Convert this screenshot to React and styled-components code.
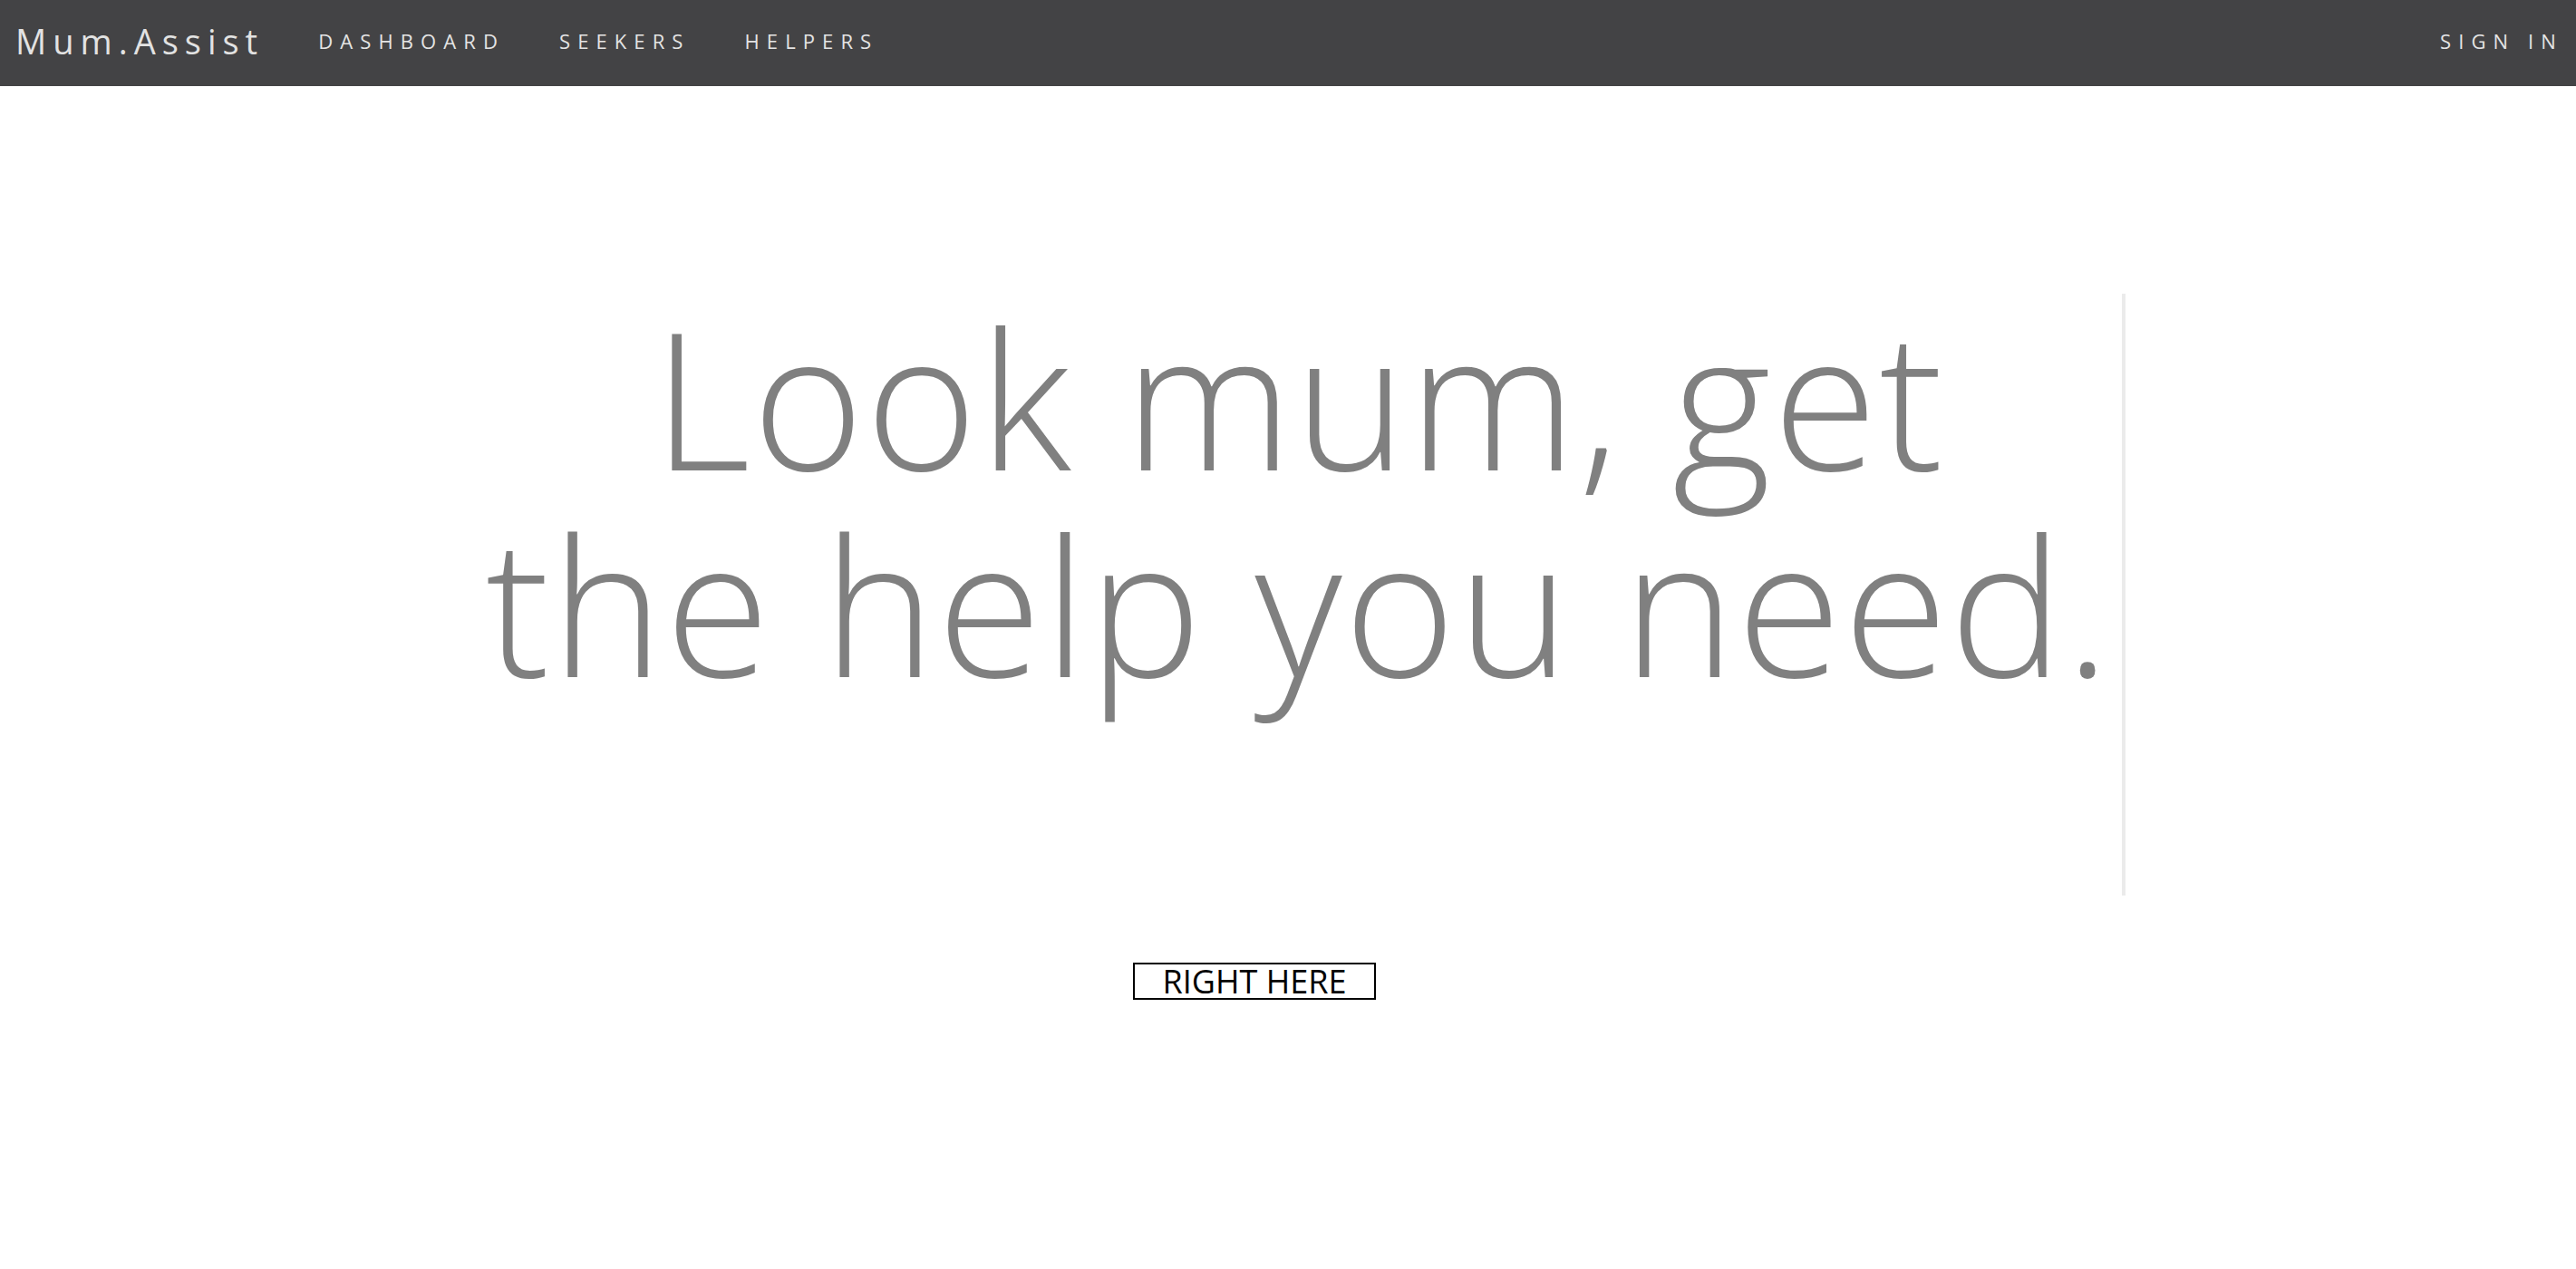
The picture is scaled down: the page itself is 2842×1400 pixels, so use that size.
import React from 'react';
import styled, { createGlobalStyle } from 'styled-components';

const GlobalStyle = createGlobalStyle`
    body {
        margin: 0;
        background: #ffffff;
        font-family: "Open Sans", "Noto Sans", sans-serif;
    }
`;

const NavBar = styled.nav`
    height: 95px;
    box-sizing: border-box;
    background-color: #434345;
    display: flex;
    align-items: center;
    justify-content: space-between;
    padding: 0 14px 5px 17px;
`;

const NavLeft = styled.div`
    display: flex;
    align-items: center;
    gap: 60px;
`;

const Brand = styled.a`
    color: #e2e2e2;
    font-size: 38px;
    letter-spacing: 7px;
    font-weight: 400;
    text-decoration: none;
`;

const NavLink = styled.a`
    color: #e4e4e4;
    font-size: 22px;
    letter-spacing: 8.1px;
    text-decoration: none;
    text-transform: uppercase;
`;

const Hero = styled.main`
    display: flex;
    flex-direction: column;
    align-items: center;
    padding: 229px 0 0 15px;
`;

const Headline = styled.h1`
    margin: 0;
    padding: 0 11px 208px 24px;
    border-right: 4px solid #ebebeb;
    font-size: 210px;
    line-height: 228px;
    font-weight: 300;
    letter-spacing: 2px;
    color: #808080;
    text-align: center;
`;

const ButtonRow = styled.div`
    display: flex;
    justify-content: center;
    padding: 74px 74px 0 0;
`;

const CallButton = styled.button`
    width: 268px;
    height: 41px;
    background: #ffffff;
    border: 2px solid #000000;
    font-family: "Open Sans", sans-serif;
    font-size: 36px;
    line-height: 1;
    color: #000000;
    padding: 0;
    cursor: pointer;
`;

export default function App() {
    return (
        <>
            <GlobalStyle />
            <NavBar>
                <NavLeft>
                    <Brand href="#">Mum.Assist</Brand>
                    <NavLink href="#">Dashboard</NavLink>
                    <NavLink href="#">Seekers</NavLink>
                    <NavLink href="#">Helpers</NavLink>
                </NavLeft>
                <NavLink href="#">Sign in</NavLink>
            </NavBar>
            <Hero>
                <Headline>
                    Look mum, get
                    <br />
                    the help you need.
                </Headline>
            </Hero>
            <ButtonRow>
                <CallButton>RIGHT HERE</CallButton>
            </ButtonRow>
        </>
    );
}
